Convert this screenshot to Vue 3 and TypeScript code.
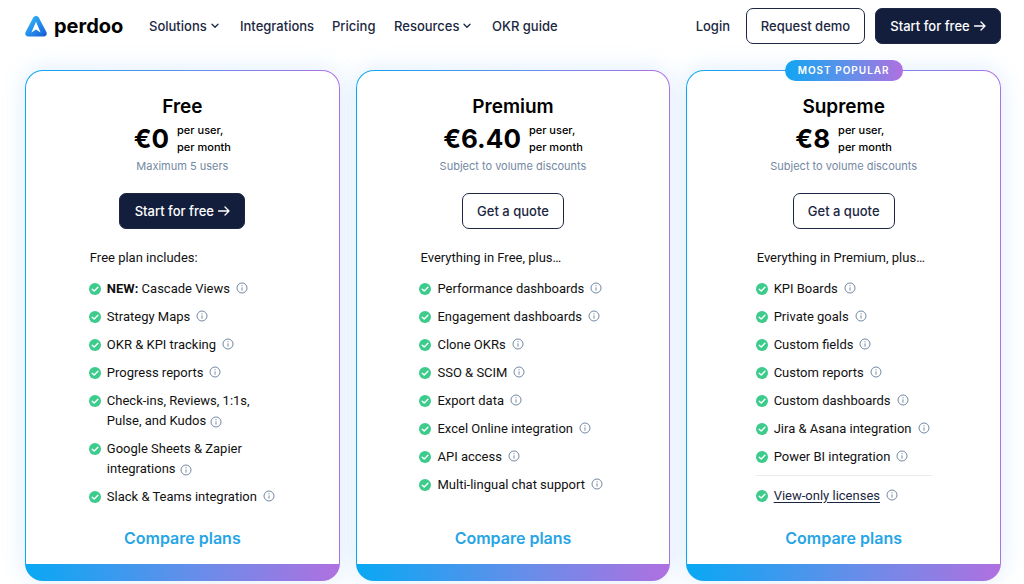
<script setup lang="ts">
interface Feature {
  lines: string[]
  strong?: string
  link?: boolean
}
interface Plan {
  id: string
  name: string
  price: string
  note: string
  free?: boolean
  popular?: boolean
  intro: string
  features: Feature[]
}

const f = (...lines: string[]): Feature => ({ lines })

const nav = [
  { label: 'Solutions', menu: true },
  { label: 'Integrations', menu: false },
  { label: 'Pricing', menu: false },
  { label: 'Resources', menu: true },
  { label: 'OKR guide', menu: false },
]

const plans: Plan[] = [
  {
    id: 'free',
    name: 'Free',
    price: '€0',
    note: 'Maximum 5 users',
    free: true,
    intro: 'Free plan includes:',
    features: [
      { strong: 'NEW:', lines: ['Cascade Views'] },
      f('Strategy Maps'),
      f('OKR & KPI tracking'),
      f('Progress reports'),
      f('Check-ins, Reviews, 1:1s,', 'Pulse, and Kudos'),
      f('Google Sheets & Zapier', 'integrations'),
      f('Slack & Teams integration'),
    ],
  },
  {
    id: 'premium',
    name: 'Premium',
    price: '€6.40',
    note: 'Subject to volume discounts',
    intro: 'Everything in Free, plus…',
    features: [
      f('Performance dashboards'),
      f('Engagement dashboards'),
      f('Clone OKRs'),
      f('SSO & SCIM'),
      f('Export data'),
      f('Excel Online integration'),
      f('API access'),
      f('Multi-lingual chat support'),
    ],
  },
  {
    id: 'supreme',
    name: 'Supreme',
    price: '€8',
    note: 'Subject to volume discounts',
    popular: true,
    intro: 'Everything in Premium, plus…',
    features: [
      f('KPI Boards'),
      f('Private goals'),
      f('Custom fields'),
      f('Custom reports'),
      f('Custom dashboards'),
      f('Jira & Asana integration'),
      f('Power BI integration'),
      { lines: ['View-only licenses'], link: true },
    ],
  },
]
</script>

<template>
  <div class="page">
    <header class="header">
      <a class="logo" href="#">
        <svg class="mark" viewBox="0 0 22 22" aria-hidden="true">
          <defs>
            <linearGradient id="markFill" x1="0" y1="0" x2="1" y2="1">
              <stop offset="0" stop-color="#35c3f5" />
              <stop offset="0.5" stop-color="#2490ee" />
              <stop offset="1" stop-color="#1857d2" />
            </linearGradient>
          </defs>
          <path fill="url(#markFill)" d="M8.4 2.2Q11 -.8 13.6 2.2L21.5 17.2Q22.6 21 18.8 21.4H3.2Q-.6 21 .5 17.2Z" />
          <path fill="#fff" d="M11 6.8L15.6 17.4L11 14.6L6.4 17.4Z" />
        </svg>
        <span>perdoo</span>
      </a>
      <nav class="nav" aria-label="Main">
        <a v-for="item in nav" :key="item.label" href="#">
          {{ item.label }}
          <svg v-if="item.menu" class="chevron" viewBox="0 0 8 6" aria-hidden="true"><path d="M1 1.2L4 4.2L7 1.2" /></svg>
        </a>
      </nav>
      <div class="actions">
        <a class="login" href="#">Login</a>
        <button class="btn outline demo" type="button">Request demo</button>
        <button class="btn solid" type="button">
          Start for free
          <svg class="arrow" viewBox="0 0 12 10" aria-hidden="true"><path d="M.5 5H11M7 1L11 5L7 9" /></svg>
        </button>
      </div>
    </header>

    <main class="plans">
      <section v-for="plan in plans" :key="plan.id" class="card">
        <span v-if="plan.popular" class="badge">MOST POPULAR</span>
        <h2>{{ plan.name }}</h2>
        <div class="price">
          <strong>{{ plan.price }}</strong>
          <span>per user,<br />per month</span>
        </div>
        <p class="note">{{ plan.note }}</p>
        <button v-if="plan.free" class="btn solid" type="button">
          Start for free
          <svg class="arrow" viewBox="0 0 12 10" aria-hidden="true"><path d="M.5 5H11M7 1L11 5L7 9" /></svg>
        </button>
        <button v-else class="btn outline quote" type="button">Get a quote</button>
        <div class="included" :class="plan.id">
          <p class="intro">{{ plan.intro }}</p>
          <ul>
            <li v-for="feature in plan.features" :key="feature.lines[0]" :class="{ divided: feature.link }">
              <svg class="check" viewBox="0 0 12 12" aria-hidden="true">
                <circle cx="6" cy="6" r="6" />
                <path d="M3.2 6.2L5.2 8.1L8.9 4.3" />
              </svg>
              <span class="text">
                <b v-if="feature.strong">{{ feature.strong }}&nbsp;</b>
                <a v-if="feature.link" href="#">{{ feature.lines[0] }}</a>
                <template v-else v-for="(line, i) in feature.lines" :key="line"><br v-if="i > 0" />{{ line }}</template>
                <svg class="info" :class="{ low: feature.lines.length > 1 }" viewBox="0 0 12 12" aria-hidden="true">
                  <circle cx="6" cy="6" r="5" />
                  <path d="M6 5.4V8.6M6 3.2V4.3" />
                </svg>
              </span>
            </li>
          </ul>
        </div>
        <a class="compare" href="#">Compare plans</a>
      </section>
    </main>
  </div>
</template>

<style>
body {
  margin: 0;
  background: #fff;
}
</style>

<style scoped>
.page {
  min-height: 100vh;
  box-sizing: border-box;
  padding: 8px 23px 3px 25px;
  overflow: hidden;
  font-family: Inter, "Liberation Sans", sans-serif;
  font-size: 13px;
  line-height: 20px;
  color: #111;
}
a {
  color: inherit;
  text-decoration: none;
}
h2,
p,
ul {
  margin: 0;
  padding: 0;
}
.header {
  display: flex;
  align-items: center;
  height: 36px;
  font-weight: 500;
  color: #1b2742;
}
.logo {
  display: flex;
  align-items: center;
  gap: 7px;
  width: 124px;
  font-size: 20px;
  font-weight: 700;
  line-height: 24px;
  color: #000;
}
.mark {
  width: 22px;
  height: 22px;
}
.nav {
  display: grid;
  grid-template-columns: 91px 92px 62px 98px auto;
  white-space: nowrap;
}
.nav a {
  display: flex;
  align-items: center;
  gap: 4px;
}
.chevron {
  width: 8px;
  height: 6px;
}
.chevron path,
.arrow path {
  fill: none;
  stroke: currentColor;
  stroke-width: 1.3;
  stroke-linecap: round;
  stroke-linejoin: round;
}
.actions {
  display: flex;
  align-items: center;
  gap: 10px;
  margin-left: auto;
}
.login {
  margin-right: 6px;
}
.btn {
  display: flex;
  align-items: center;
  justify-content: center;
  gap: 4px;
  box-sizing: border-box;
  height: 36px;
  padding: 0;
  border: 1px solid #1d2743;
  border-radius: 7px;
  font: 500 13px/20px Inter, "Liberation Sans", sans-serif;
  white-space: nowrap;
}
.solid {
  width: 126px;
  background: #131e3c;
  color: #fff;
}
.outline {
  background: #fff;
  color: #1b2742;
}
.demo {
  width: 119px;
}
.quote {
  width: 102px;
}
.arrow {
  width: 12px;
  height: 10px;
}
.plans {
  display: grid;
  grid-template-columns: repeat(3, 1fr);
  gap: 16px;
  margin-top: 26px;
}
.card {
  position: relative;
  display: flex;
  flex-direction: column;
  align-items: center;
  box-sizing: border-box;
  padding: 24px 0 30px;
  border: 1px solid transparent;
  border-radius: 18px;
  background:
    linear-gradient(#fff, #fff) 0 0 / 100% calc(100% - 16px) no-repeat padding-box,
    linear-gradient(90deg, #08a8f4, #688de9 55%, #b070e0) border-box;
  box-shadow: 0 0 24px rgba(60, 150, 255, 0.18);
}
.badge {
  position: absolute;
  top: -11px;
  left: 50%;
  transform: translateX(-50%);
  padding: 0 13px;
  border-radius: 11px;
  background: linear-gradient(90deg, #12a5f2, #648fe9 55%, #b070e0);
  color: #fff;
  font-size: 10px;
  font-weight: 600;
  line-height: 21px;
  letter-spacing: 1px;
  white-space: nowrap;
}
h2 {
  font-size: 19px;
  font-weight: 600;
  line-height: 24px;
  color: #000;
}
.price {
  display: flex;
  align-items: center;
  gap: 8px;
  height: 38px;
  padding-top: 1px;
  box-sizing: border-box;
  color: #000;
}
.price strong {
  font-size: 26px;
  font-weight: 700;
  line-height: 32px;
}
.price span {
  font-size: 11px;
  font-weight: 500;
  line-height: 17px;
}
.note {
  font-size: 11px;
  line-height: 18px;
  color: #7488a3;
  margin-bottom: 18px;
}
.included {
  display: flex;
  flex-direction: column;
  gap: 11px;
  width: 187px;
  min-height: 274px;
  margin-top: 19px;
  font-family: Roboto, "Liberation Sans", sans-serif;
  font-size: 13px;
  white-space: nowrap;
}
.included.supreme {
  width: 176px;
}
.intro {
  padding-left: 1px;
}
ul {
  display: flex;
  flex-direction: column;
  gap: 8px;
  list-style: none;
}
li {
  display: flex;
  gap: 6px;
}
.check {
  flex: none;
  width: 12px;
  height: 12px;
  margin-top: 4px;
}
.check circle {
  fill: #3bcb8b;
}
.check path {
  fill: none;
  stroke: #fff;
  stroke-width: 1.4;
  stroke-linecap: round;
  stroke-linejoin: round;
}
b {
  font-weight: 700;
}
.text a {
  color: #1b2742;
  text-decoration: underline;
  text-underline-offset: 2px;
}
.info {
  width: 12px;
  height: 12px;
  margin-left: 6px;
  vertical-align: -1px;
}
.info.low {
  margin-left: 4px;
  vertical-align: -3px;
}
.info circle,
.info path {
  fill: none;
  stroke: #7488a3;
  stroke-width: 1;
}
.divided {
  padding-top: 10px;
  border-top: 1px solid #e8eaee;
}
.compare {
  margin-top: 4px;
  font-size: 16px;
  font-weight: 600;
  line-height: 24px;
  color: #27a5e4;
}
</style>
